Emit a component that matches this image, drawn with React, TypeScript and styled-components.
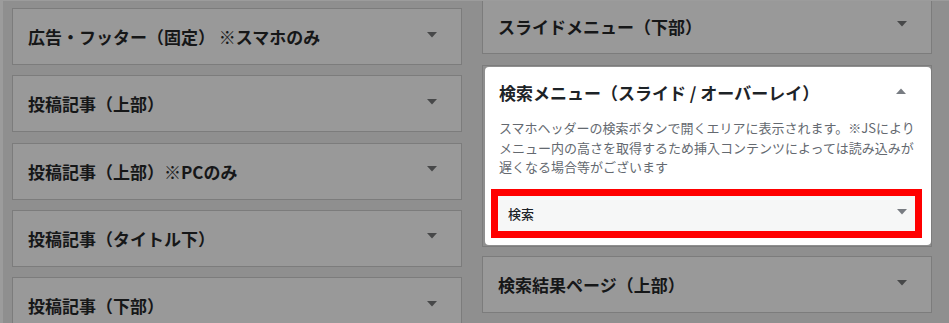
import React from "react";
import styled, { createGlobalStyle } from "styled-components";

const GlobalStyle = createGlobalStyle`
  html, body {
    margin: 0;
    padding: 0;
    background: #9c9c9c;
    overflow: hidden;
  }
  body {
    font-family: "Noto Sans CJK JP", "Noto Sans", sans-serif;
  }
`;

const Page = styled.div`
  margin: 1px 0 0 3px;
  height: 322px;
  background: #8f8f8f;
  display: flex;
  align-items: flex-start;
  gap: 20px;
  padding-left: 9px;
  overflow: hidden;
`;

const LeftColumn = styled.div`
  width: 450px;
  display: flex;
  flex-direction: column;
  gap: 10.25px;
  padding-top: 7px;
`;

const RightColumn = styled.div`
  width: 450px;
  display: flex;
  flex-direction: column;
  margin-top: -3px;
`;

const Panel = styled.div<{ $h?: number; $mb?: number }>`
  box-sizing: border-box;
  height: ${(p) => p.$h ?? 57}px;
  margin-bottom: ${(p) => p.$mb ?? 0}px;
  border: 1px solid #7c7c7c;
  background: #999999;
  display: flex;
  align-items: center;
  justify-content: space-between;
  padding: 0 24px 0 15px;
  flex-shrink: 0;
`;

const Title = styled.h3<{ $dim?: boolean }>`
  margin: 0;
  font-size: 17px;
  font-weight: 700;
  line-height: 1;
  color: ${(p) => (p.$dim ? "#161718" : "#1d2327")};
  white-space: pre;
`;

const ArrowBox = styled.span<{ $color: string }>`
  display: flex;
  width: 10px;
  height: 6px;
  margin-bottom: 4px;
  color: ${(p) => p.$color};
`;

const Arrow = ({ up, color }: { up?: boolean; color: string }) => (
  <ArrowBox $color={color}>
    <svg width="10" height="6" viewBox="0 0 10 6">
      {up ? (
        <polygon points="0,6 10,6 5,0.5" fill="currentColor" />
      ) : (
        <polygon points="0,0 10,0 5,5.5" fill="currentColor" />
      )}
    </svg>
  </ArrowBox>
);

const HighlightPanel = styled.div`
  box-sizing: border-box;
  height: 182px;
  margin-bottom: 9px;
  border: 1px solid #7c7c7c;
  padding: 1px 0 1px 2px;
  flex-shrink: 0;
  display: flex;
`;

const HighlightCard = styled.div`
  flex: 1;
  background: #ffffff;
  border-radius: 4px;
  display: flex;
  flex-direction: column;
`;

const CardHeader = styled.div`
  height: 51px;
  display: flex;
  align-items: center;
  justify-content: space-between;
  padding: 0 25px 0 14px;
  flex-shrink: 0;
`;

const Description = styled.p`
  margin: 0;
  padding: 0 14px;
  font-size: 13px;
  line-height: 19.5px;
  color: #646970;
  white-space: nowrap;
`;

const RedFrame = styled.div`
  box-sizing: border-box;
  width: 431px;
  height: 49px;
  margin: 12.5px 0 0 6px;
  border: 7px solid #ff0000;
  display: flex;
`;

const SelectBox = styled.div`
  flex: 1;
  background: #f6f7f7;
  display: flex;
  align-items: center;
  justify-content: space-between;
  padding: 0 8px 0 10px;
`;

const SelectText = styled.span`
  font-size: 13px;
  font-weight: 500;
  color: #1d2327;
  line-height: 1;
`;

const leftTitles = [
  "広告・フッター（固定） ※スマホのみ",
  "投稿記事（上部）",
  "投稿記事（上部）※PCのみ",
  "投稿記事（タイトル下）",
  "投稿記事（下部）",
];

const DIM_ARROW = "#474849";
const ARROW = "#787c82";

export default function App() {
  return (
    <>
      <GlobalStyle />
      <Page>
        <LeftColumn>
          {leftTitles.map((t) => (
            <Panel key={t}>
              <Title $dim>{t}</Title>
              <Arrow color={DIM_ARROW} />
            </Panel>
          ))}
        </LeftColumn>
        <RightColumn>
          <Panel $h={56} $mb={11}>
            <Title $dim>スライドメニュー（下部）</Title>
            <Arrow color={DIM_ARROW} />
          </Panel>
          <HighlightPanel>
            <HighlightCard>
              <CardHeader>
                <Title>検索メニュー（スライド / オーバーレイ）</Title>
                <Arrow up color={ARROW} />
              </CardHeader>
              <Description>
                スマホヘッダーの検索ボタンで開くエリアに表示されます。※JSにより
                <br />
                メニュー内の高さを取得するため挿入コンテンツによっては読み込みが
                <br />
                遅くなる場合等がございます
              </Description>
              <RedFrame>
                <SelectBox>
                  <SelectText>検索</SelectText>
                  <Arrow color={ARROW} />
                </SelectBox>
              </RedFrame>
            </HighlightCard>
          </HighlightPanel>
          <Panel>
            <Title $dim>検索結果ページ（上部）</Title>
            <Arrow color={DIM_ARROW} />
          </Panel>
        </RightColumn>
      </Page>
    </>
  );
}
